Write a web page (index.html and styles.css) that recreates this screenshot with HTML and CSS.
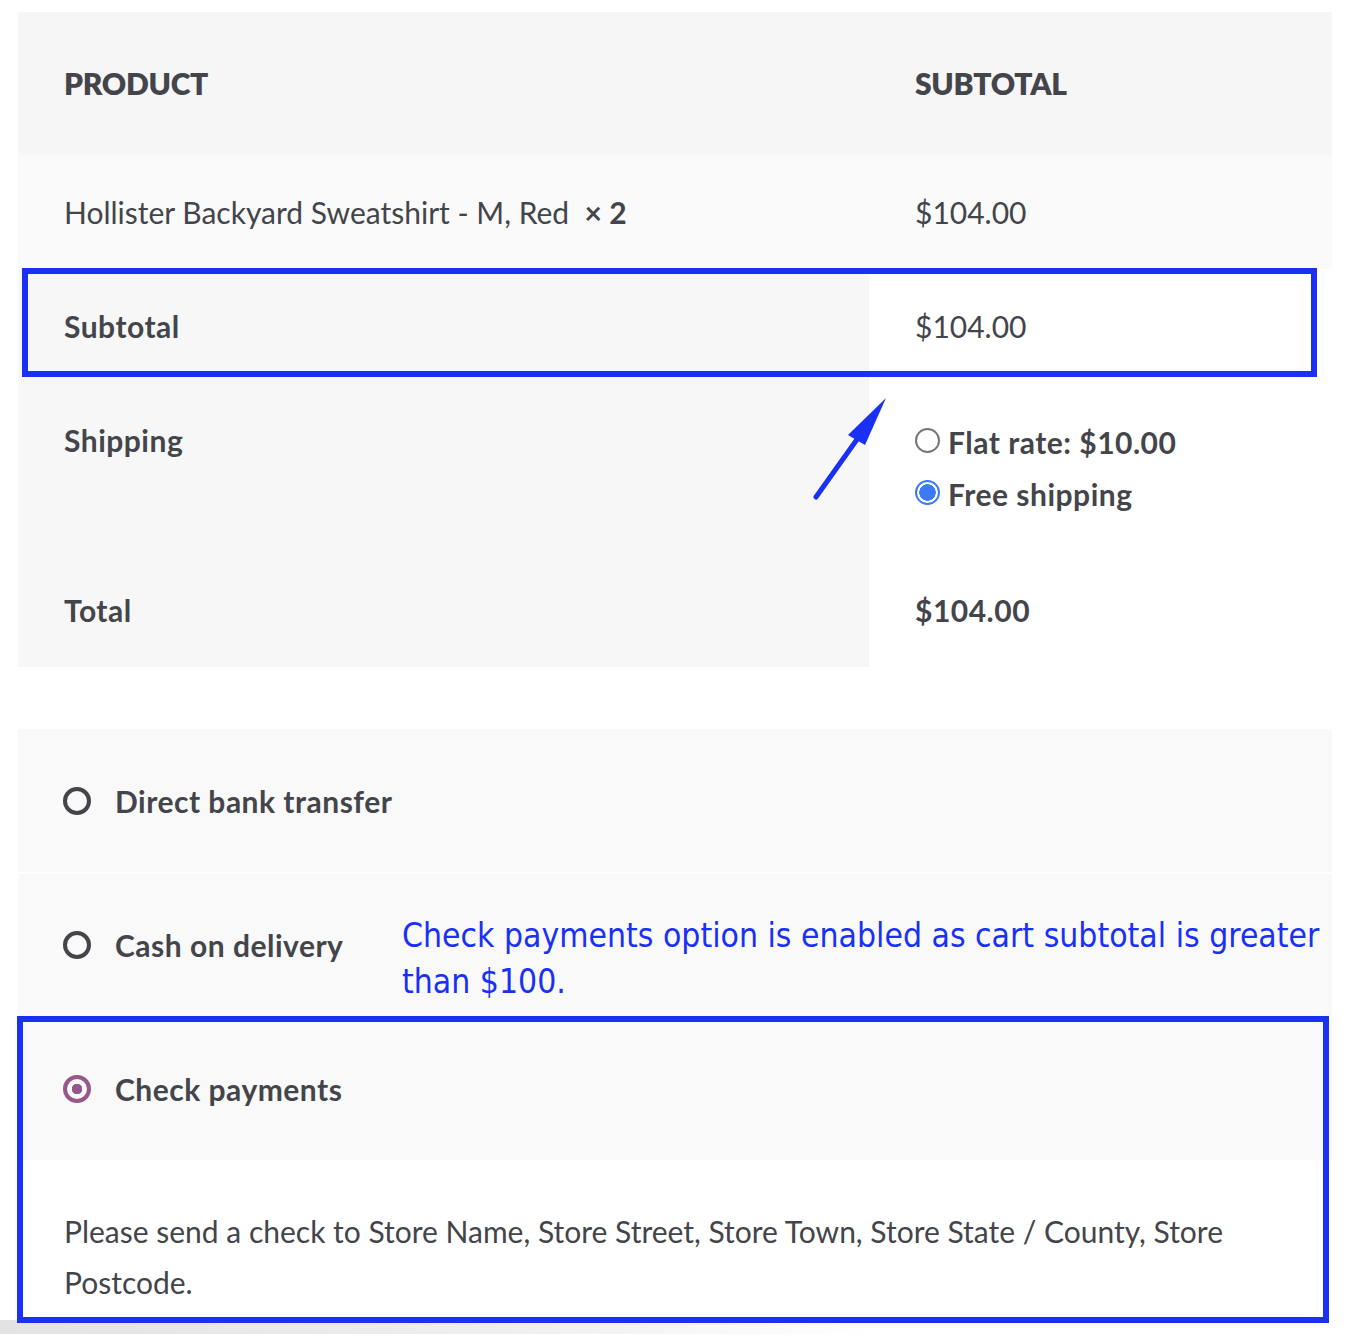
FILE: index.html
```html
<!DOCTYPE html>
<html lang="en">
<head>
  <meta charset="UTF-8">
  <meta name="viewport" content="width=device-width, initial-scale=1.0">
  <title>Checkout review</title>
  <link rel="stylesheet" href="styles.css">
</head>
<body>
  <div class="page">
    <div class="review">
      <table class="shopTable">
        <thead>
          <tr>
            <th class="colName">Product</th>
            <th class="colTotal">Subtotal</th>
          </tr>
        </thead>
        <tbody>
          <tr class="cartItem">
            <td>Hollister Backyard Sweatshirt - M, Red&nbsp; <strong class="qty">&times;&nbsp;2</strong></td>
            <td>$104.00</td>
          </tr>
        </tbody>
        <tfoot>
          <tr>
            <th>Subtotal</th>
            <td>$104.00</td>
          </tr>
          <tr class="shipping">
            <th>Shipping</th>
            <td>
              <ul class="shipMethods">
                <li><span class="radio"></span>Flat rate: $10.00</li>
                <li><span class="radio on"></span>Free shipping</li>
              </ul>
            </td>
          </tr>
          <tr>
            <th>Total</th>
            <td><strong>$104.00</strong></td>
          </tr>
        </tfoot>
      </table>

      <!-- annotation: box + arrow -->
      <div class="mark markSubtotal"></div>
      <svg class="arrow" width="90" height="120" viewBox="0 0 90 120">
        <line x1="14" y1="111" x2="56" y2="52" stroke="#1a30f5" stroke-width="5" stroke-linecap="round"/>
        <polygon points="84,12 63,59 46,49" fill="#1a30f5"/>
      </svg>
    </div>

    <ul class="payments">
      <li class="payRow"><span class="payDot"></span><label>Direct bank transfer</label></li>
      <li class="payRow"><span class="payDot"></span><label>Cash on delivery</label></li>
      <li class="payRow"><span class="payDot picked"></span><label>Check payments</label></li>
      <li class="payBox">
        <p>Please send a check to Store Name, Store Street, Store Town, Store State / County, Store Postcode.</p>
      </li>
    </ul>

    <p class="note">Check payments option is enabled as cart subtotal is greater than $100.</p>
    <div class="mark markCheck"></div>
  </div>
  <div class="shade"></div>
</body>
</html>
```
FILE: styles.css
```css
body {
  margin: 0;
  background: #fff;
  font-family: Lato, "Open Sans", sans-serif;
  font-size: 30px;
  color: #43454b;
}
.page {
  position: relative;
  width: 1314px;
  padding: 12px 0 0 18px;
}
.review {
  position: relative;
}
.shopTable {
  width: 1314px;
  border-collapse: collapse;
  table-layout: fixed;
}
.shopTable th,
.shopTable td {
  padding: 33px 46px;
  line-height: 48px;
  text-align: left;
  vertical-align: top;
}
.shopTable .colName {
  width: 759px;
}
.shopTable thead th {
  padding-top: 47px;
  padding-bottom: 48px;
  background: #f6f6f6;
  text-transform: uppercase;
  letter-spacing: -0.3px;
  font-weight: 800;
}
.cartItem td {
  background: #fafafa;
}
.shopTable tfoot th,
.shopTable tfoot strong,
.shipMethods,
.payRow {
  font-weight: 700;
  letter-spacing: 0.5px;
}
.qty {
  font-weight: 700;
}
.shopTable tfoot th {
  background: #f7f7f7;
}
.shopTable tfoot td {
  background: #fff;
}
.shipMethods {
  list-style: none;
  margin: 0;
  padding: 0;
}
.shipMethods li {
  display: flex;
  align-items: center;
  height: 52px;
}
.radio {
  box-sizing: border-box;
  width: 25px;
  height: 25px;
  margin: -4px 8px 0 0;
  border: 2px solid #767676;
  border-radius: 50%;
  background: #fff;
}
.radio.on {
  border-color: #3b7bf5;
  background: radial-gradient(circle, #3b7bf5 0 8px, #fff 8.5px);
}

.mark {
  position: absolute;
  box-sizing: border-box;
  border: 6px solid #1a30f5;
  pointer-events: none;
}
.markSubtotal {
  left: 4px;
  top: 256px;
  width: 1295px;
  height: 109px;
}
.arrow {
  position: absolute;
  left: 784px;
  top: 374px;
}

.payments {
  list-style: none;
  margin: 62px 0 0;
  padding: 0;
  width: 1314px;
}
.payRow {
  display: flex;
  align-items: center;
  height: 143px;
  padding-left: 45px;
  background: #f9f9f9;
}
.payRow + .payRow {
  border-top: 2px solid #fff;
  height: 142px;
}
.payDot {
  box-sizing: border-box;
  width: 28px;
  height: 28px;
  margin-right: 24px;
  border: 4px solid #43454b;
  border-radius: 50%;
}
.payDot.picked {
  border-color: #96588a;
  background: radial-gradient(circle, #96588a 0 5px, transparent 5.5px);
}
.payBox {
  background: #fff;
  padding: 46px 46px 12px;
}
.payBox p {
  margin: 0;
  line-height: 51px;
}

.note {
  position: absolute;
  left: 402px;
  top: 913px;
  width: 935px;
  margin: 0;
  font-family: "DejaVu Sans Condensed", "DejaVu Sans", sans-serif;
  font-stretch: condensed;
  font-size: 33.4px;
  line-height: 46px;
  color: #1a30f5;
}
.markCheck {
  left: 17px;
  top: 1016px;
  width: 1312px;
  height: 307px;
}
.shade {
  height: 14px;
  background: linear-gradient(90deg, #e3e3e3 0%, #f0f0f0 40%, #fff 65%);
}
```
